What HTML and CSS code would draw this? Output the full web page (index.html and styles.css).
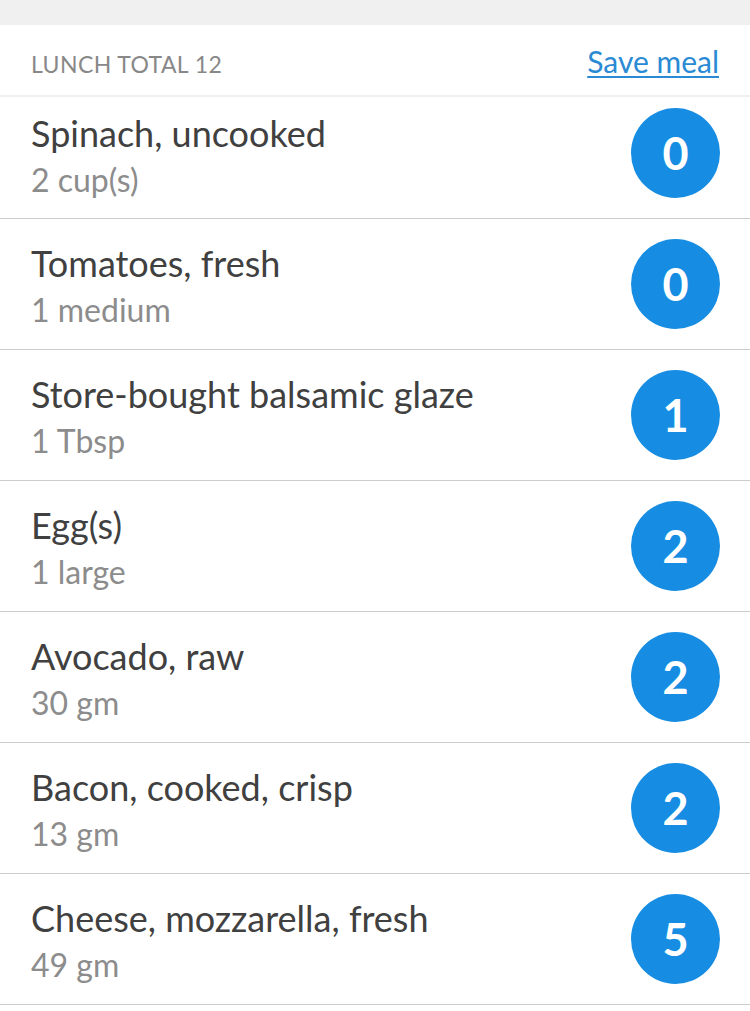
FILE: index.html
```html
<!DOCTYPE html>
<html>
<head>
<meta charset="utf-8">
<link rel="stylesheet" href="styles.css">
</head>
<body>
<div class="topband"></div>
<div class="header">
  <span class="total">LUNCH TOTAL 12</span>
  <a class="save" href="#">Save meal</a>
</div>
<ul class="list">
  <li class="row first"><div class="info"><div class="name">Spinach, uncooked</div><div class="qty">2 cup(s)</div></div><div class="badge">0</div></li>
  <li class="row"><div class="info"><div class="name">Tomatoes, fresh</div><div class="qty">1 medium</div></div><div class="badge">0</div></li>
  <li class="row"><div class="info"><div class="name">Store-bought balsamic glaze</div><div class="qty">1 Tbsp</div></div><div class="badge">1</div></li>
  <li class="row"><div class="info"><div class="name">Egg(s)</div><div class="qty">1 large</div></div><div class="badge">2</div></li>
  <li class="row"><div class="info"><div class="name">Avocado, raw</div><div class="qty">30 gm</div></div><div class="badge">2</div></li>
  <li class="row"><div class="info"><div class="name">Bacon, cooked, crisp</div><div class="qty">13 gm</div></div><div class="badge">2</div></li>
  <li class="row"><div class="info"><div class="name">Cheese, mozzarella, fresh</div><div class="qty">49 gm</div></div><div class="badge">5</div></li>
</ul>
</body>
</html>
```
FILE: styles.css
```css
* { box-sizing: border-box; }
html, body { margin: 0; padding: 0; background: #fff; }
body { font-family: Lato, "Open Sans", sans-serif; width: 750px; height: 1011px; overflow: hidden; }
.topband { height: 25px; background: #f0f0f0; }
.header {
  height: 72px;
  display: flex;
  align-items: baseline;
  justify-content: space-between;
  padding: 18px 31px 0 31px;
  border-bottom: 2px solid #f0f0f0;
}
.total { font-size: 23px; line-height: 28px; color: #888; letter-spacing: 0.4px; }
.save {
  font-size: 30px; line-height: 36px; color: #2a8ad4;
  text-decoration: underline; text-underline-offset: 3px; text-decoration-thickness: 2px;
}
.list { list-style: none; margin: 0; padding: 0; }
.row {
  height: 131px;
  display: flex;
  align-items: center;
  justify-content: space-between;
  padding: 0 30px 0 31px;
  border-bottom: 1px solid #ccc;
}
.row.first { height: 122px; padding-bottom: 9px; }
.info { display: flex; flex-direction: column; align-self: flex-start; padding-top: 22px; }
.row.first .info { padding-top: 14px; }
.name { font-size: 36px; color: #404040; line-height: 44px; }
.qty { font-size: 32px; color: #8c8c8c; line-height: 50px; }
.badge {
  width: 89px; height: 90px; border-radius: 50%;
  background: #168de2; color: #fff;
  display: flex; align-items: center; justify-content: center;
  font-size: 45px; font-weight: 700;
}
```
